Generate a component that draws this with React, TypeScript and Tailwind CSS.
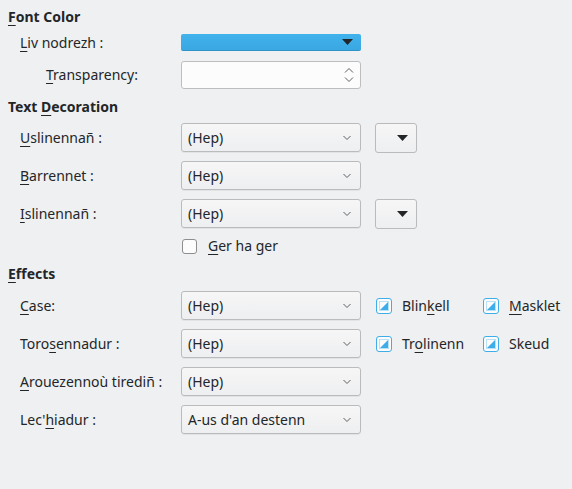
import React from "react";

const font = { fontFamily: '"Noto Sans", "DejaVu Sans", sans-serif' };

function U({ children }: { children: React.ReactNode }) {
  return <span className="underline underline-offset-[3px] decoration-1">{children}</span>;
}

function Chevron() {
  return (
    <svg width="10" height="6" viewBox="0 0 10 6" className="shrink-0">
      <path d="M1.5 1 L5 4.5 L8.5 1" fill="none" stroke="#5c5f62" strokeWidth="1" />
    </svg>
  );
}

function Combo({ text }: { text: string }) {
  return (
    <div className="w-[180px] h-[29px] rounded-[3px] border border-[#b9bbbd] bg-gradient-to-b from-[#f6f6f7] to-[#eeeff0] flex items-center justify-between pl-[6px] pr-[8px] shadow-[0_1px_0_rgba(0,0,0,0.05)]">
      <span>{text}</span>
      <Chevron />
    </div>
  );
}

function SmallBtn() {
  return (
    <div className="ml-[14px] w-[42px] h-[30px] rounded-[3px] border border-[#b9bbbd] bg-gradient-to-b from-[#f6f6f7] to-[#eeeff0] flex items-center justify-end pr-[8px]">
      <svg width="11" height="6" viewBox="0 0 11 6">
        <path d="M0 0 H11 L5.5 6 Z" fill="#232629" />
      </svg>
    </div>
  );
}

function TriBox() {
  return (
    <div className="w-[16px] h-[16px] rounded-[3px] border-[1.5px] border-[#3daee9] bg-[#fcfcfc] flex items-center justify-center">
      <svg width="10" height="10" viewBox="0 0 10 10">
        <path d="M1 9 L9 1 L9 9 Z" fill="#3daee9" />
        <rect x="0.5" y="0.5" width="9" height="9" fill="none" stroke="#3daee9" strokeWidth="1" opacity="0.35" />
      </svg>
    </div>
  );
}

function Row({ label, children }: { label: React.ReactNode; children: React.ReactNode }) {
  return (
    <div className="flex items-center h-[29px]">
      <div className="w-[181px] pl-[20px] shrink-0">{label}</div>
      {children}
    </div>
  );
}

export default function App() {
  return (
    <div
      style={font}
      className="w-[572px] h-[489px] bg-[#eff0f1] text-[#232629] text-[14px] leading-[18px] flex flex-col overflow-hidden"
    >
      <div className="mt-[8px] pl-[8px] font-bold h-[18px]">
        <U>F</U>ont Color
      </div>
      <div className="mt-[8px] flex items-center h-[17px]">
        <div className="w-[181px] pl-[20px] shrink-0">
          <U>L</U>iv nodrezh :
        </div>
        <div className="w-[180px] h-[17px] rounded-[2px] bg-gradient-to-b from-[#41b2ec] to-[#3aa8e2] border-b border-[#2f93c7] flex items-center justify-end pr-[8px]">
          <svg width="11" height="6" viewBox="0 0 11 6">
            <path d="M0 0 H11 L5.5 6 Z" fill="#232629" />
          </svg>
        </div>
      </div>
      <div className="mt-[10px] flex items-center h-[28px]">
        <div className="w-[181px] pl-[46px] shrink-0">
          <U>T</U>ransparency:
        </div>
        <div className="w-[180px] h-[28px] rounded-[3px] border border-[#bcbebf] bg-[#fcfcfc] flex items-center justify-end pr-[6px]">
          <svg width="10" height="16" viewBox="0 0 10 16">
            <path d="M1 5.5 L5 1.5 L9 5.5" fill="none" stroke="#5c5f62" strokeWidth="1" />
            <path d="M1 10.5 L5 14.5 L9 10.5" fill="none" stroke="#5c5f62" strokeWidth="1" />
          </svg>
        </div>
      </div>
      <div className="mt-[9px] pl-[8px] font-bold h-[18px]">
        Text <U>D</U>ecoration
      </div>
      <div className="mt-[7px] flex flex-col gap-[9px]">
        <Row label={<><U>U</U>slinennañ :</>}>
          <Combo text="(Hep)" />
          <SmallBtn />
        </Row>
        <Row label={<><U>B</U>arrennet :</>}>
          <Combo text="(Hep)" />
        </Row>
        <Row label={<><U>I</U>slinennañ :</>}>
          <Combo text="(Hep)" />
          <SmallBtn />
        </Row>
      </div>
      <div className="mt-[9px] flex items-center h-[18px] pl-[182px]">
        <div className="w-[15px] h-[15px] rounded-[3px] border border-[#8c8e90] bg-[#fcfcfc]" />
        <span className="ml-[11px]">
          <U>G</U>er ha ger
        </span>
      </div>
      <div className="mt-[10px] pl-[8px] font-bold h-[18px]">
        <U>E</U>ffects
      </div>
      <div className="mt-[8px] flex flex-col gap-[9px]">
        <Row label={<><U>C</U>ase:</>}>
          <Combo text="(Hep)" />
          <div className="ml-[15px] flex items-center w-[107px]">
            <TriBox />
            <span className="ml-[10px]">
              Blin<U>k</U>ell
            </span>
          </div>
          <div className="flex items-center">
            <TriBox />
            <span className="ml-[10px]">
              <U>M</U>asklet
            </span>
          </div>
        </Row>
        <Row label={<>Toro<U>s</U>ennadur :</>}>
          <Combo text="(Hep)" />
          <div className="ml-[15px] flex items-center w-[107px]">
            <TriBox />
            <span className="ml-[10px]">
              Tr<U>o</U>linenn
            </span>
          </div>
          <div className="flex items-center">
            <TriBox />
            <span className="ml-[10px]">Skeud</span>
          </div>
        </Row>
        <Row label={<><U>A</U>rouezennoù tirediñ :</>}>
          <Combo text="(Hep)" />
        </Row>
        <Row label={<>Lec'<U>h</U>iadur :</>}>
          <Combo text="A-us d'an destenn" />
        </Row>
      </div>
    </div>
  );
}
